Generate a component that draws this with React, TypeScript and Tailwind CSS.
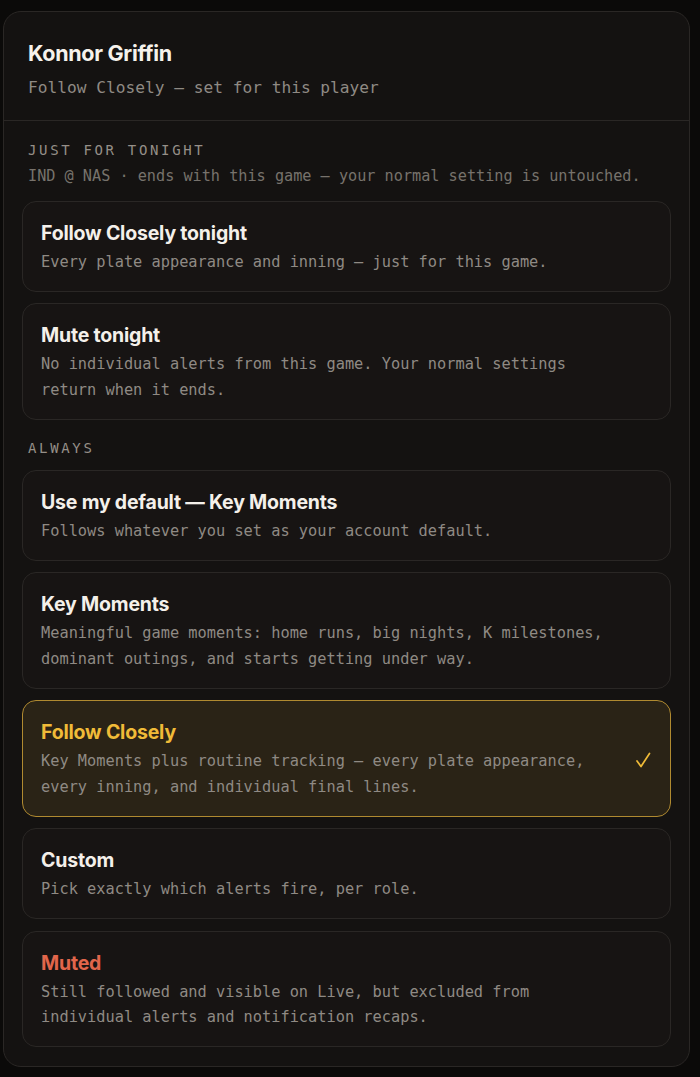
import React from "react";

const mono = { fontFamily: '"DejaVu Sans Mono", "Liberation Mono", monospace' };

type Opt = {
  title: string;
  desc: string;
  tone?: "normal" | "selected" | "danger";
};

const tonight: Opt[] = [
  { title: "Follow Closely tonight", desc: "Every plate appearance and inning — just for this game." },
  { title: "Mute tonight", desc: "No individual alerts from this game. Your normal settings return when it ends." },
];

const always: Opt[] = [
  { title: "Use my default — Key Moments", desc: "Follows whatever you set as your account default." },
  {
    title: "Key Moments",
    desc: "Meaningful game moments: home runs, big nights, K milestones, dominant outings, and starts getting under way.",
  },
  {
    title: "Follow Closely",
    desc: "Key Moments plus routine tracking — every plate appearance, every inning, and individual final lines.",
    tone: "selected",
  },
  { title: "Custom", desc: "Pick exactly which alerts fire, per role." },
  {
    title: "Muted",
    desc: "Still followed and visible on Live, but excluded from individual alerts and notification recaps.",
    tone: "danger",
  },
];

function Card({ o }: { o: Opt }) {
  const selected = o.tone === "selected";
  return (
    <div
      className={
        "flex items-center rounded-[14px] border pl-[18px] pr-[18px] pt-[18px] pb-[15.5px] " +
        (selected ? "border-[#b08a30] bg-[#2a2316]" : "border-[#2a2725] bg-[#171413]")
      }
    >
      <div className="flex-1 min-w-0">
        <div
          className={
            "text-[19.5px] leading-[26px] font-bold tracking-[-0.2px] " +
            (selected ? "text-[#f0bb38]" : o.tone === "danger" ? "text-[#e2664b]" : "text-[#f4f0ea]")
          }
          style={{ fontFamily: 'Inter, "Noto Sans", sans-serif' }}
        >
          {o.title}
        </div>
        <div className="mt-[4px] max-w-[572px] text-[15.3px] leading-[25.5px] text-[#8f8a84]" style={mono}>
          {o.desc}
        </div>
      </div>
      {selected && (
        <svg width="18" height="18" viewBox="0 0 18 18" className="shrink-0" fill="none">
          <path d="M3 10 L7 15.5 L15.5 2.5" stroke="#f0bb38" strokeWidth="1.7" strokeLinecap="round" strokeLinejoin="round" />
        </svg>
      )}
    </div>
  );
}

export default function App() {
  return (
    <div className="min-h-[1077px] bg-[#0b0a09] pt-[11px] pl-[3px] pr-[10px] pb-[12px]">
      <div className="rounded-[18px] border border-[#2a2725] bg-[#141211]">
        <div className="px-[24px] pt-[27px] pb-[20px] border-b border-[#2a2725]">
          <div
            className="text-[21.5px] leading-[28px] font-bold text-[#f6f2ec] tracking-[-0.3px]"
            style={{ fontFamily: 'Inter, "Noto Sans", sans-serif' }}
          >
            Konnor Griffin
          </div>
          <div className="mt-[9px] text-[16.2px] leading-[24px] text-[#8f8a84]" style={mono}>
            Follow Closely — set for this player
          </div>
        </div>
        <div className="px-[18px] pt-[19px] pb-[19px]">
          <div className="px-[6px] text-[14px] leading-[20px] tracking-[0.19em] text-[#958f88]" style={mono}>
            JUST FOR TONIGHT
          </div>
          <div className="mt-[5px] px-[6px] text-[15.2px] leading-[22px] text-[#77726c] whitespace-nowrap" style={mono}>
            IND @ NAS · ends with this game — your normal setting is untouched.
          </div>
          <div className="mt-[14px] flex flex-col gap-[11px]">
            {tonight.map((o) => (
              <Card key={o.title} o={o} />
            ))}
          </div>
          <div className="mt-[18px] px-[6px] text-[14px] leading-[20px] tracking-[0.19em] text-[#958f88]" style={mono}>
            ALWAYS
          </div>
          <div className="mt-[12px] flex flex-col gap-[11.5px]">
            {always.map((o) => (
              <Card key={o.title} o={o} />
            ))}
          </div>
        </div>
      </div>
    </div>
  );
}
